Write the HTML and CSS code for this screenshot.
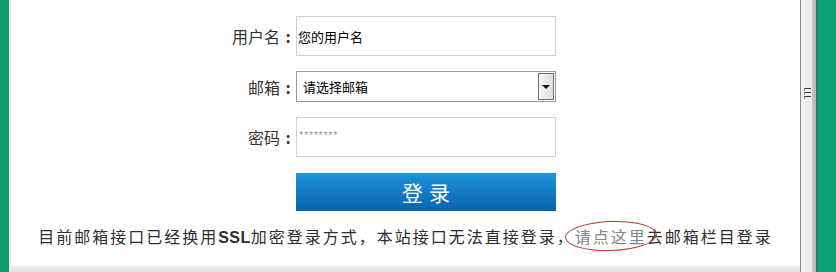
FILE: index.html
```html
<!DOCTYPE html>
<html lang="zh-CN">
<head>
<meta charset="utf-8">
<title>登录</title>
<link rel="stylesheet" href="styles.css">
</head>
<body>
<div class="frame">
  <div class="edge-left"></div>
  <div class="edge-gap"></div>
  <div class="edge-line"></div>
  <div class="content">
    <div class="main">
      <div class="form">
        <div class="label">用户名<span class="colon">:</span></div>
        <div class="field field-text">您的用户名</div>

        <div class="label">邮箱<span class="colon">:</span></div>
        <div class="field field-select">
          <span class="select-text">请选择邮箱</span>
          <span class="select-btn"><span class="arrow"></span></span>
        </div>

        <div class="label">密码<span class="colon">:</span></div>
        <div class="field field-pass"><span class="placeholder">********</span></div>

        <div class="spacer"></div>
        <div class="btn">登录</div>
      </div>
      <p class="notice">目前邮箱接口已经换用<b class="ssl">SSL</b>加密登录方式，本站接口无法直接登录，<span class="here">请点这里</span>去邮箱栏目登录</p>
    </div>
    <div class="bottom-band"></div>
  </div>
  <div class="scrollbar">
    <div class="grip"><i></i><i></i><i></i></div>
  </div>
  <div class="scroll-shade"></div>
  <div class="edge-dark"></div>
  <div class="edge-right"></div>
</div>
</body>
</html>
```

FILE: styles.css
```css
html, body {
  margin: 0;
  padding: 0;
  background: #ffffff;
}

body {
  font-family: "Noto Sans CJK SC", "Noto Sans", sans-serif;
  color: #333333;
}

.frame {
  display: flex;
  width: 836px;
  height: 272px;
  overflow: hidden;
}

.edge-left {
  width: 9px;
  flex: none;
  background: #119a6d;
}

.edge-gap {
  width: 1px;
  flex: none;
  background: #fbfbfb;
}

.edge-line {
  width: 1px;
  flex: none;
  background: #e9e3e8;
}

.content {
  flex: 1;
  display: flex;
  flex-direction: column;
  background: #ffffff;
  min-width: 0;
}

.main {
  flex: 1;
}

.form {
  display: grid;
  grid-template-columns: 285px 260px;
  grid-auto-rows: auto;
  row-gap: 15px;
  padding-top: 16px;
}

.label {
  display: flex;
  align-items: center;
  justify-content: flex-end;
  font-size: 16px;
  color: #333333;
}

.colon {
  display: inline-block;
  width: 16px;
  text-align: center;
  font-weight: bold;
}

.field {
  box-sizing: border-box;
  background: #ffffff;
  display: flex;
  align-items: center;
}

.field-text {
  height: 40px;
  border: 1px solid #d0d0d0;
  padding-left: 1px;
  font-size: 13px;
  color: #000000;
}

.field-select {
  height: 31px;
  border: 1px solid #9a9a9a;
  padding: 1px 1px 1px 6px;
  font-size: 13px;
  color: #000000;
  justify-content: space-between;
}

.select-btn {
  box-sizing: border-box;
  width: 16px;
  height: 27px;
  border: 1px solid #6e6e6e;
  background: linear-gradient(to right, #f7f7f7, #dedede);
  display: flex;
  align-items: center;
  justify-content: center;
}

.arrow {
  width: 0;
  height: 0;
  border-left: 4px solid transparent;
  border-right: 4px solid transparent;
  border-top: 4px solid #111111;
}

.field-pass {
  height: 40px;
  border: 1px solid #d0d0d0;
  padding-left: 2px;
  align-items: flex-start;
}

.placeholder {
  font-family: "Liberation Sans", sans-serif;
  font-size: 11px;
  letter-spacing: 0.6px;
  color: #9a9a9a;
  margin-top: 11px;
}

.spacer {
  height: 38px;
}

.btn {
  height: 38px;
  margin-top: 1px;
  background: linear-gradient(to bottom, #1c93db, #0c63ad);
  color: #ffffff;
  font-size: 21px;
  letter-spacing: 6px;
  text-indent: 6px;
  display: flex;
  align-items: center;
  justify-content: center;
}

.notice {
  margin: 13px 0 0;
  text-align: center;
  font-size: 16px;
  letter-spacing: 2px;
  line-height: 24px;
  color: #2e2e2e;
  white-space: nowrap;
}

.ssl {
  font-family: "Liberation Sans", sans-serif;
  font-weight: bold;
  letter-spacing: 0.5px;
}

.here {
  position: relative;
  color: #7d8690;
}

.here::after {
  content: "";
  position: absolute;
  left: -10px;
  right: -10px;
  top: -3px;
  bottom: -3px;
  border: 1px solid #c0392b;
  border-radius: 50%;
  transform: rotate(-2deg);
}

.bottom-band {
  height: 6px;
  background: linear-gradient(to bottom, #ededed, #e3e3e3);
}

.scrollbar {
  box-sizing: border-box;
  width: 12px;
  flex: none;
  border-left: 1px solid #8c8c8c;
  background: linear-gradient(to right, #f4f4f6, #e9e9ec);
  display: flex;
  flex-direction: column;
  align-items: center;
  padding-top: 88px;
}

.grip {
  display: flex;
  flex-direction: column;
  gap: 2px;
  width: 7px;
  margin-left: 1px;
}

.grip i {
  display: block;
  height: 1px;
  border-top: 1px solid #3a3a3a;
  border-left: 1px dotted #888;
}

.scroll-shade {
  width: 4px;
  flex: none;
  background: linear-gradient(to right, #c9c9cc, #b6b6ba);
}

.edge-dark {
  width: 2px;
  flex: none;
  background: #2a7a5c;
}

.edge-right {
  width: 18px;
  flex: none;
  background: #0aa373;
}
```
